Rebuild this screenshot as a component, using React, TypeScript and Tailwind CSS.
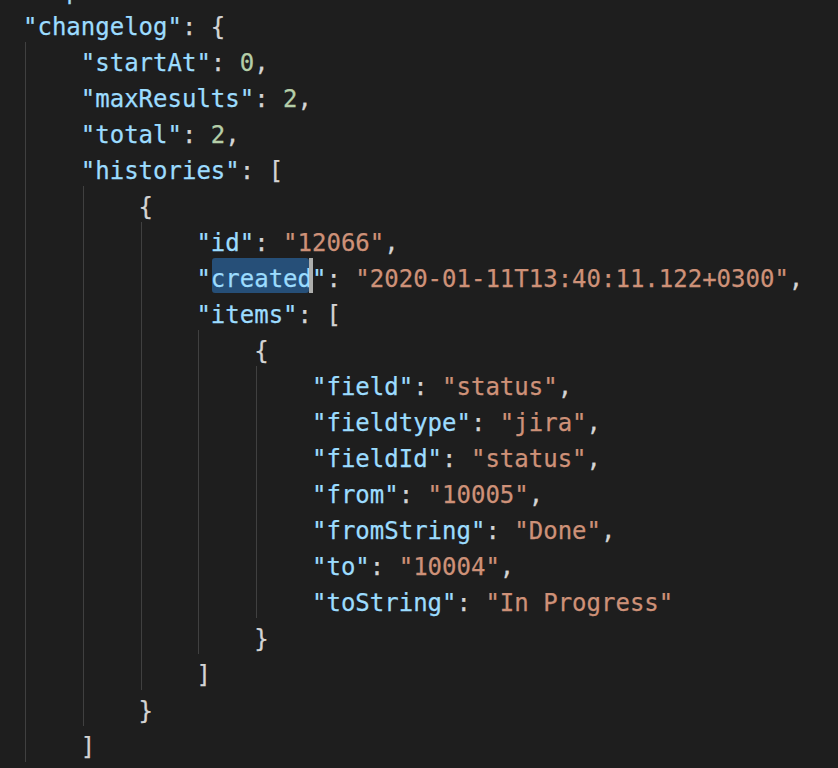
import type { ReactNode } from "react";

// json editor snippet, vscode dark+ colours
const Key = ({ children }: { children: ReactNode }) => (
  <span className="text-[#9cdcfe]">{children}</span>
);
const Str = ({ children }: { children: ReactNode }) => (
  <span className="text-[#ce9178]">{children}</span>
);
const Num = ({ children }: { children: ReactNode }) => (
  <span className="text-[#b5cea8]">{children}</span>
);

// 36px row, glyphs sit a little low like in the editor
const Line = ({ children }: { children?: ReactNode }) => (
  <div className="h-[36px] leading-[42px] whitespace-pre text-[#d4d4d4]">{children}</div>
);

// nested block: left border is the indent guide (4 cols = 57.8px)
const Block = ({ children }: { children: ReactNode }) => (
  <div className="ml-[2px] border-l border-[#404040] pl-[54.8px]">{children}</div>
);

const Prop = ({ k, v, kind, last }: { k: string; v: string; kind: "s" | "n"; last?: boolean }) => (
  <Line>
    <Key>"{k}"</Key>:{" "}
    {kind === "s" ? <Str>"{v}"</Str> : <Num>{v}</Num>}
    {last ? "" : ","}
  </Line>
);

const App = () => {
  return (
    <div className="w-[838px] h-[768px] overflow-hidden bg-[#1e1e1e] pl-[23px] text-[24px] font-['DejaVu_Sans_Mono',monospace] [-webkit-text-stroke:0.25px_currentcolor]">
      <div className="-mt-[30px]">
        <Line>
          <Key>"expand"</Key>: <Str>"renderedFields"</Str>
        </Line>
        <Line>
          <Key>"changelog"</Key>: {"{"}
        </Line>
        <Block>
          <Prop k="startAt" v="0" kind="n" />
          <Prop k="maxResults" v="2" kind="n" />
          <Prop k="total" v="2" kind="n" />
          <Line>
            <Key>"histories"</Key>: [
          </Line>
          <Block>
            <Line>{"{"}</Line>
            <Block>
              <Prop k="id" v="12066" kind="s" />
              <Line>
                <Key>
                  "
                  <span className="relative inline-block">
                    {/* selection + cursor */}
                    <span className="absolute left-[1px] right-[3px] top-0 h-[35px] rounded-[3px] bg-[#264f78]" />
                    <span className="relative">created</span>
                    <span className="absolute right-[-1px] top-0 h-[35px] w-[4px] bg-[#aeafad]" />
                  </span>
                  "
                </Key>
                : <Str>"2020-01-11T13:40:11.122+0300"</Str>,
              </Line>
              <Line>
                <Key>"items"</Key>: [
              </Line>
              <Block>
                <Line>{"{"}</Line>
                <Block>
                  <Prop k="field" v="status" kind="s" />
                  <Prop k="fieldtype" v="jira" kind="s" />
                  <Prop k="fieldId" v="status" kind="s" />
                  <Prop k="from" v="10005" kind="s" />
                  <Prop k="fromString" v="Done" kind="s" />
                  <Prop k="to" v="10004" kind="s" />
                  <Prop k="toString" v="In Progress" kind="s" last />
                </Block>
                <Line>{"}"}</Line>
              </Block>
              <Line>]</Line>
            </Block>
            <Line>{"}"}</Line>
          </Block>
          <Line>]</Line>
        </Block>
        <Line>{"}"}</Line>
      </div>
    </div>
  );
};

export default App;
